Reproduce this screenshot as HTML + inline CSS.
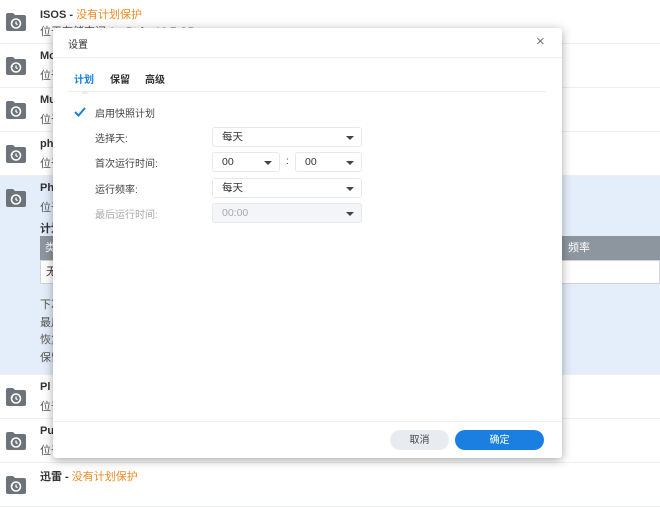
<!DOCTYPE html>
<html><head><meta charset="utf-8"><style>
*{margin:0;padding:0;box-sizing:border-box}
body{width:660px;height:485px;overflow:hidden;background:#fff;font-family:"Liberation Sans","Noto Sans CJK SC",sans-serif;position:relative;color:#333}
.row{position:absolute;left:0;width:660px;border-bottom:1px solid #eceef0}
.ic{position:absolute;left:6px;width:20px;height:18px}
.t{position:absolute;left:40px;font-size:11px;font-weight:bold;color:#333}
.t span{color:#f08a24;font-weight:normal}
.s{position:absolute;left:40px;font-size:11px;color:#555}
.dlg{position:absolute;left:53px;top:28px;width:509px;height:430px;background:#fff;border-radius:3px;box-shadow:0 2px 10px rgba(0,0,0,.35)}
.a{position:absolute;font-size:10px}
.sel{position:absolute;height:20px;border:1px solid #e6e8eb;border-radius:3px;font-size:10.5px;padding-left:9px;line-height:19px;color:#333}
.sel:after{content:"";position:absolute;right:7px;top:8px;border-left:4px solid transparent;border-right:4px solid transparent;border-top:4px solid #444}
</style></head><body>
<svg width="0" height="0" style="position:absolute"><defs><g id="fi"><path d="M0 2 Q0 0 2 0 H7 L9 2 H18 Q20 2 20 4 V16 Q20 18 18 18 H2 Q0 18 0 16Z" fill="#6c737a"/><circle cx="10" cy="10.5" r="4.5" fill="none" stroke="#fff" stroke-width="1.6"/><path d="M10 8.5V10.7L11.5 11.7" stroke="#fff" stroke-width="1.3" fill="none"/><path d="M4.5 9.5 L6 7.5 L7 10" fill="#fff"/></g></defs></svg>

<div class="row" style="top:0;height:44px"><svg class="ic" style="top:13px"><use href="#fi"/></svg><div class="t" style="top:6px">ISOS - <span>没有计划保护</span></div><div class="s" style="top:23px">位于存储空间 1，Btrfs, 16.7 GB</div></div>
<div class="row" style="top:44px;height:44px"><svg class="ic" style="top:13px"><use href="#fi"/></svg><div class="t" style="top:6px">Mo</div><div class="s" style="top:23px">位于</div></div>
<div class="row" style="top:88px;height:44px"><svg class="ic" style="top:13px"><use href="#fi"/></svg><div class="t" style="top:6px">Mu</div><div class="s" style="top:23px">位于</div></div>
<div class="row" style="top:132px;height:44px"><svg class="ic" style="top:13px"><use href="#fi"/></svg><div class="t" style="top:6px">ph</div><div class="s" style="top:23px">位于</div></div>
<div class="row" style="top:176px;height:199px;background:#e4eefa"><svg class="ic" style="top:13px"><use href="#fi"/></svg><div class="t" style="top:6px">Ph</div><div class="s" style="top:23px">位于</div><div class="t" style="top:44px">计划</div>
<div style="position:absolute;left:40px;top:60px;width:620px;height:24px;background:#8d969e;color:#fff;font-size:11px;line-height:24px"><span style="position:absolute;left:5px">类</span><span style="position:absolute;left:528px">频率</span></div>
<div style="position:absolute;left:40px;top:84px;width:620px;height:24px;background:#fff;border:1px solid #d0d4d8;font-size:11px;line-height:22px;padding-left:5px">无</div>
<div class="s" style="top:120px">下次</div><div class="s" style="top:138px">最后</div><div class="s" style="top:155px">恢复</div><div class="s" style="top:173px">保留</div></div>
<div class="row" style="top:375px;height:44px"><svg class="ic" style="top:13px"><use href="#fi"/></svg><div class="t" style="top:6px">Pl</div><div class="s" style="top:23px">位于</div></div>
<div class="row" style="top:419px;height:44px"><svg class="ic" style="top:13px"><use href="#fi"/></svg><div class="t" style="top:6px">Pu</div><div class="s" style="top:23px">位于</div></div>
<div class="row" style="top:463px;height:44px"><svg class="ic" style="top:13px"><use href="#fi"/></svg><div class="t" style="top:5px">迅雷 - <span>没有计划保护</span></div></div>

<div class="dlg">
<div class="a" style="left:15px;top:8px;color:#333">设置</div>
<div class="a" style="left:483px;top:5px;font-size:15px;color:#777">×</div>
<div style="position:absolute;left:0;top:29px;width:509px;border-top:1px solid #eef0f2"></div>
<div class="a" style="left:21px;top:43px;color:#1a7fe0;font-weight:bold">计划</div>
<div class="a" style="left:57px;top:43px;font-weight:bold;color:#333">保留</div>
<div class="a" style="left:92px;top:43px;font-weight:bold;color:#333">高级</div>
<div style="position:absolute;left:15px;top:63px;width:478px;border-top:1px solid #eceef0"></div>
<div style="position:absolute;left:28px;top:62px;border-left:4px solid transparent;border-right:4px solid transparent;border-bottom:4px solid #eceef0"></div>
<svg style="position:absolute;left:20px;top:78px" width="14" height="12"><path d="M2 6 L5.5 9.5 L12 2" stroke="#1a7fe0" stroke-width="2" fill="none"/></svg>
<div class="a" style="left:42px;top:77px;color:#444">启用快照计划</div>
<div class="a" style="left:42px;top:102px;color:#444">选择天:</div>
<div class="a" style="left:42px;top:127px;color:#444">首次运行时间:</div>
<div class="a" style="left:42px;top:153px;color:#444">运行频率:</div>
<div class="a" style="left:42px;top:178px;color:#aaa">最后运行时间:</div>
<div class="sel" style="left:159px;top:99px;width:150px">每天</div>
<div class="sel" style="left:159px;top:124px;width:68px">00</div>
<div class="a" style="left:233px;top:128px">:</div>
<div class="sel" style="left:242px;top:124px;width:67px">00</div>
<div class="sel" style="left:159px;top:150px;width:150px">每天</div>
<div class="sel" style="left:159px;top:175px;width:150px;background:#f3f5f8;color:#aaa">00:00</div>
<div style="position:absolute;left:0;top:393px;width:509px;border-top:1px solid #eef0f2"></div>
<div style="position:absolute;left:337px;top:402px;width:59px;height:20px;border-radius:10px;background:#e8ecf1;font-size:10px;text-align:center;line-height:21px;color:#444">取消</div>
<div style="position:absolute;left:402px;top:402px;width:89px;height:20px;border-radius:10px;background:#1a7fe0;font-size:10px;text-align:center;line-height:21px;color:#fff">确定</div>
</div>
</body></html>
